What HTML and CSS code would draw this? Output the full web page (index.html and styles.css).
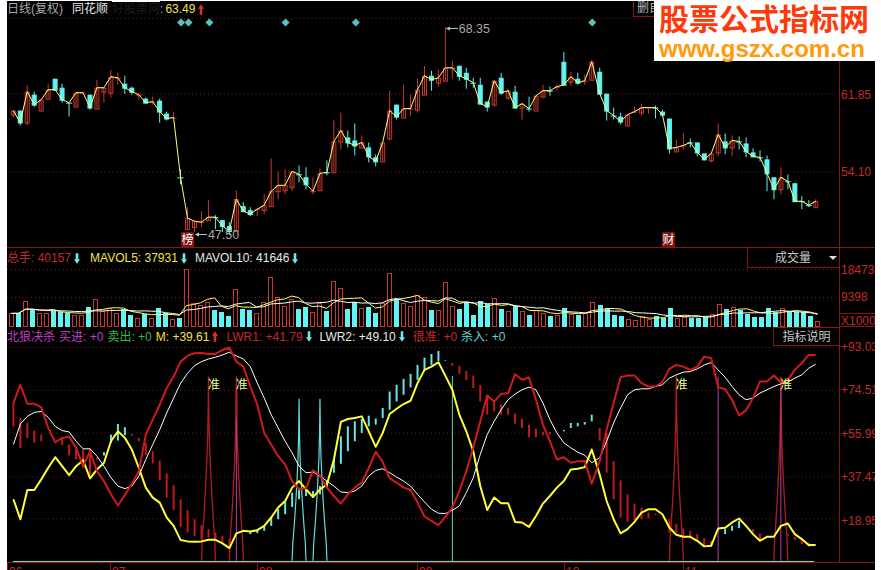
FILE: index.html
```html
<!DOCTYPE html>
<html lang="zh-CN">
<head>
    <meta charset="UTF-8">
    <title>北狼决杀 日线</title>
    <link rel="stylesheet" href="styles.css">
</head>
<body>
    <div class="chart">
        <div class="pane pane-main">
            <div class="plot">
                <div class="legend">
                    <span class="gray">日线(复权)</span>
                    <span class="white name">同花顺</span>
                    <span class="ghost">好股票网</span>
                    <span class="gray">:</span>
                    <span class="yellow val">63.49</span>
                    <svg class="arrow red-fill" viewBox="0 0 7 12"><path d="M3.5 0 7 5H5v7H2V5H0z"/></svg>
                    <div class="btn-del">删自</div>
                </div>
                <svg id="mainPlot" class="canvas" viewBox="7 17 832 231"></svg>
            </div>
            <div class="axis axis-main">
                <span>61.85</span>
                <span>54.10</span>
            </div>
        </div>

        <div class="pane pane-vol">
            <div class="plot">
                <div class="legend">
                    <span class="red">总手: 40157</span>
                    <svg class="arrow cyan-fill" viewBox="0 0 7 12"><path d="M2 0h3v7h2l-3.5 5L0 7h2z"/></svg>
                    <span class="yellow gap-vol">MAVOL5: 37931</span>
                    <svg class="arrow cyan-fill" viewBox="0 0 7 12"><path d="M2 0h3v7h2l-3.5 5L0 7h2z"/></svg>
                    <span class="white gap">MAVOL10: 41646</span>
                    <svg class="arrow cyan-fill" viewBox="0 0 7 12"><path d="M2 0h3v7h2l-3.5 5L0 7h2z"/></svg>
                    <div class="box box-vol"><span>成交量</span><i class="caret"></i></div>
                </div>
                <svg id="volPlot" class="canvas" viewBox="7 268 832 59"></svg>
            </div>
            <div class="axis axis-vol">
                <span>18473</span>
                <span>9398</span>
                <span class="unit">X1000</span>
            </div>
        </div>

        <div class="pane pane-ind">
            <div class="plot">
                <div class="legend">
                    <span class="magenta">北狼决杀</span>
                    <span class="magenta gap-s">买进: +0</span>
                    <span class="green gap-s">卖出: +0</span>
                    <span class="yellow gap-s">M: +39.61</span>
                    <svg class="arrow red-fill" viewBox="0 0 7 12"><path d="M3.5 0 7 5H5v7H2V5H0z"/></svg>
                    <span class="red gap">LWR1: +41.79</span>
                    <svg class="arrow cyan-fill" viewBox="0 0 7 12"><path d="M2 0h3v7h2l-3.5 5L0 7h2z"/></svg>
                    <span class="white gap">LWR2: +49.10</span>
                    <svg class="arrow cyan-fill" viewBox="0 0 7 12"><path d="M2 0h3v7h2l-3.5 5L0 7h2z"/></svg>
                    <span class="red gap">很准: +0</span>
                    <span class="cyan gap-s">杀入: +0</span>
                    <div class="box box-ind">指标说明</div>
                </div>
                <svg id="indPlot" class="canvas" viewBox="7 346 832 217"></svg>
            </div>
            <div class="axis axis-ind">
                <span>+93.03</span>
                <span>+74.51</span>
                <span>+55.99</span>
                <span>+37.47</span>
                <span>+18.95</span>
            </div>
        </div>

        <div class="dates">
            <span>06</span>
            <span>07</span>
            <span>08</span>
            <span>09</span>
            <span>10</span>
            <span>11</span>
        </div>

        <div class="logo">
            <div class="logo-title">股票公式指标网</div>
            <div class="logo-url">www.gszx.com.cn</div>
        </div>
    </div>

    <script src="chart.js"></script>
</body>
</html>
```

FILE: styles.css
```css
* {
    box-sizing: border-box;
}

body {
    margin: 0;
    background-color: white;
    font-family: "Liberation Sans", "Noto Sans CJK SC", sans-serif;
    font-size: 12px;
}

.chart {
    position: relative;
    width: 868px;
    height: 570px;
    margin-left: 7px;
    border-top: 1px solid white;
    background-color: black;
    overflow: hidden;
}

.pane {
    display: flex;
}

.pane-main {
    height: 247px;
}

.pane-vol {
    height: 79px;
}

.pane-ind {
    height: 236px;
    border-bottom: 1px solid #8a1515;
}

.plot {
    display: flex;
    flex-direction: column;
    width: 833px;
    border-right: 1px solid #8a1515;
}

.canvas {
    display: block;
    width: 832px;
    flex: 1;
    min-height: 0;
}

.pane-main .plot {
    border-bottom: 1px solid #8a1515;
}

.legend {
    display: flex;
    align-items: center;
    flex: none;
    white-space: nowrap;
    line-height: 14px;
}

.pane-main .legend {
    height: 16px;
}

.pane-vol .legend {
    height: 20px;
}

.pane-ind .legend {
    height: 19px;
}

.gray { color: #a9a9a9; }
.white { color: #e8e8e8; }
.yellow { color: #f5e14a; }
.red { color: #c42a26; }
.magenta { color: #c03fc0; }
.green { color: #39b54a; }
.cyan { color: #5fd6d6; }

.name {
    margin-left: 9px;
}

.ghost {
    margin-left: 4px;
    color: #1c1c1c;
    box-shadow: 0 -2px 0 white;
}

.val {
    margin-left: 2px;
}

.gap {
    margin-left: 8px;
}

.gap-vol {
    margin-left: 10px;
}

.gap-s {
    margin-left: 4px;
}

.arrow {
    flex: none;
    width: 6px;
    height: 11px;
    margin-left: 3px;
}

.red-fill { fill: #d8302a; }
.cyan-fill { fill: #6fe9ee; }

.btn-del {
    height: 16px;
    width: 50px;
    margin-left: auto;
    margin-right: 156px;
    padding-left: 3px;
    border: 1px solid #8a1515;
    border-top: 0;
    color: #b5b5b5;
}

.box {
    display: flex;
    align-items: center;
    height: 100%;
    margin-left: auto;
    color: #c8c8c8;
    border-left: 1px solid #8a1515;
    border-bottom: 1px solid #8a1515;
}

.box-vol {
    width: 92px;
    padding-left: 27px;
}

.box-ind {
    width: 66px;
    justify-content: center;
    border-top: 1px solid #8a1515;
}

.caret {
    width: 0;
    height: 0;
    margin-left: 18px;
    border-left: 4px solid transparent;
    border-right: 4px solid transparent;
    border-top: 4px solid #ddd;
}

.axis {
    display: flex;
    flex-direction: column;
    width: 35px;
    padding-left: 1px;
    color: #c42a26;
    white-space: nowrap;
    line-height: 14px;
    overflow: hidden;
}

.axis-main {
    padding-top: 87px;
    gap: 63px;
    border-bottom: 1px solid #8a1515;
}

.axis-vol {
    padding-top: 15px;
    gap: 13px;
}

.unit {
    margin-left: -1px;
    padding-left: 1px;
    height: 14px;
    margin-top: -4px;
    border-top: 1px solid #8a1515;
    border-bottom: 1px solid #8a1515;
}

.axis-ind {
    padding-top: 13px;
    gap: 29.4px;
}

.dates {
    display: grid;
    grid-template-columns: 103px 147px 160px 147px 119px 1fr;
    height: 7px;
    color: #c42a26;
    line-height: 14px;
    overflow: hidden;
}

.dates span {
    padding-top: 2px;
    padding-left: 1px;
    border-left: 1px solid #8a1515;
}

.logo {
    position: absolute;
    top: -1px;
    right: 0;
    width: 221px;
    height: 61px;
    padding-left: 5px;
    background-color: white;
    font-weight: bold;
    white-space: nowrap;
}

.logo-title {
    color: #ff3a0a;
    font-size: 30px;
    line-height: 40px;
    letter-spacing: 0;
}

.logo-url {
    margin-top: -3px;
    color: #ff9a0a;
    font-size: 24px;
    line-height: 24px;
}

/* chart marks */
.grid { stroke: #7a1414; stroke-width: 1; stroke-dasharray: 1 3; }
.up { fill: none; stroke: #c8382f; }
.down { fill: #62f3f3; stroke: #62f3f3; }
.wick-up { stroke: #c8382f; }
.wick-down { stroke: #62f3f3; }
.close-line { fill: none; stroke: #ffff73; stroke-width: 1; }
.diamond { fill: #55c4bc; }
.note { fill: #a8a8a8; font-size: 12.5px; }
.note-line { stroke: #c8c8c8; }
.note-head { fill: #c8c8c8; }
.tag { fill: #85110f; }
.tag-text { fill: white; font-size: 12px; }
.vol-ma5 { fill: none; stroke: #ffff66; }
.vol-ma10 { fill: none; stroke: white; }
.lwr1 { fill: none; stroke: #cf1a1e; stroke-width: 2; stroke-linejoin: round; }
.m-line { fill: none; stroke: #ffff33; stroke-width: 2; stroke-linejoin: round; }
.lwr2 { fill: none; stroke: white; stroke-width: 1; }
.bar-red { stroke: #c21a1a; stroke-width: 2; }
.bar-cyan { stroke: #66e6e6; stroke-width: 2; }
.spike-red { fill: none; stroke: #b01c1c; stroke-width: 1.3; }
.spike-cyan { fill: none; stroke: #66dddd; stroke-width: 1.2; }
.base { stroke: #66dddd; }
.stem-pink { stroke: #b43cb4; }
.stem-green { stroke: #62dcb4; }
.zhun { fill: #e4ff90; font-size: 12px; }
```

FILE: chart.js
```js
// x position of the n-th trading day
function dayX(i) {
    return Math.round(11 + 7.006 * i) + 0.5;
}

// [up, body top, body bottom, high, low]
var candles = [
    [1,111,115,111,118],[0,111,123,111,126],[1,92,123,86,126],[0,95,105,92,107],[1,100,111,100,111],
    [1,90,99,84,99],[0,79,90,79,90],[0,88,100,84,103],[0,103,103,103,117],[1,93,107,93,107],
    [1,93,93,93,93],[0,95,108,95,110],[1,88,109,80,109],[1,88,92,88,103],[1,77,93,70,98],
    [1,78,78,73,85],[0,84,88,76,94],[0,88,92,87,95],[1,95,95,93,100],[0,99,103,98,104],
    [1,102,102,97,105],[0,101,112,99,123],[0,114,119,112,121],[1,118,118,112,118],[0,178,178,170,185],
    [1,219,230,208,230],[1,222,228,222,233],[1,223,223,212,228],[1,218,221,201,221],[0,218,218,216,230],
    [0,221,227,221,233],[0,227,232,223,236],[1,200,232,191,232],[0,207,212,203,212],[0,211,215,208,217],
    [1,210,210,209,217],[1,206,211,195,215],[1,192,207,159,207],[1,186,192,172,200],[1,186,191,170,195],
    [1,172,188,172,192],[0,175,175,166,183],[0,178,185,168,190],[1,192,192,178,195],[1,174,191,169,191],
    [0,173,173,161,176],[1,142,173,121,173],[1,131,142,113,150],[0,138,143,131,148],[0,141,146,124,156],
    [1,143,148,136,148],[0,148,157,143,163],[0,158,162,155,167],[1,143,162,143,162],[1,111,139,91,141],
    [0,105,117,105,120],[1,109,118,85,118],[1,109,109,95,116],[1,90,110,79,113],[1,76,95,66,95],
    [0,76,80,71,91],[1,78,83,70,87],[1,68,81,27,81],[1,68,68,61,79],[0,66,76,66,81],
    [0,73,79,68,89],[0,83,83,78,88],[0,85,104,78,104],[0,102,107,102,112],[1,81,105,81,107],
    [0,78,93,73,95],[1,91,98,89,100],[0,92,108,86,108],[1,104,108,104,120],[0,109,109,97,112],
    [1,96,111,96,111],[1,91,97,85,98],[0,91,91,87,96],[1,87,87,85,91],[0,62,85,52,85],
    [1,77,82,72,86],[0,79,83,73,85],[1,81,81,75,85],[1,62,80,60,80],[0,72,94,68,94],
    [0,94,111,94,121],[0,116,116,108,120],[0,117,122,113,125],[1,115,126,115,126],[1,112,112,107,114],
    [1,108,113,104,116],[1,108,108,108,114],[0,108,108,106,119],[0,112,115,110,117],[0,119,149,119,154],
    [1,148,152,140,152],[1,146,146,134,150],[0,143,143,139,148],[0,143,153,143,157],[0,154,160,154,161],
    [1,154,161,154,163],[1,135,153,124,157],[0,142,148,134,155],[1,141,148,136,157],[0,142,142,137,150],
    [0,144,152,138,158],[0,153,157,149,157],[0,158,158,151,162],[0,160,174,156,192],[0,178,190,178,200],
    [1,178,190,168,195],[0,182,182,175,190],[0,184,202,184,202],[0,202,202,197,210],[0,206,206,201,208],
    [1,202,208,200,208]
];

// top of each volume bar, as 3x pixels from y=245
var volTops = [
    205,205,168,192,205,205,198,200,205,210, 210,186,163,198,190,203,192,210,218,208,
    218,190,205,222,218,72,175,180,170,195, 200,212,133,192,195,205,172,95,155,183,
    162,192,185,202,175,197,108,130,192,172, 190,186,205,175,85,163,175,183,150,155,
    195,195,112,183,192,172,210,168,178,158, 192,198,183,198,210,195,203,213,210,190,
    207,210,203,172,180,188,210,213,223,226, 212,222,212,218,190,218,215,220,218,215,
    208,178,192,187,195,207,215,215,190,200, 190,200,202,202,212,228
];

// indicator lines, as 3x pixels from y=345
var lwr1 = [
    175,120,177,177,188,250,293,280,277,310, 365,320,380,410,450,484,452,418,380,270,
    225,180,130,95,50,32,25,24,27,27, 15,8,50,65,125,180,265,300,335,360,
    410,435,432,378,393,430,455,478,450,430, 415,370,322,352,402,415,430,437,475,517,
    530,543,518,490,440,380,310,230,152,170, 148,145,88,105,98,165,240,290,345,338,
    355,350,350,418,350,255,175,97,92,92, 115,125,125,112,72,60,65,75,65,35,
    40,127,133,165,212,197,160,110,110,92, 113,105,75,55,30,30
];
var mLine = [
    465,525,437,437,405,370,338,365,392,365, 347,402,375,355,290,260,280,315,370,430,
    460,475,520,545,588,592,593,592,587,587, 598,612,568,560,562,558,545,520,490,470,
    430,410,435,458,435,420,345,232,223,220, 215,260,307,265,208,192,178,168,115,75,
    65,52,93,135,210,260,320,425,497,460, 477,477,533,535,548,515,478,455,430,410,
    375,373,368,315,390,470,525,568,555,533, 505,495,495,510,550,572,578,578,590,607,
    605,553,551,535,523,545,570,590,578,578, 545,538,570,585,603,603
];
var lwr2 = [
    300,238,215,203,200,218,245,258,262,290, 313,313,335,365,400,425,433,425,395,345,
    300,255,205,160,115,85,62,50,42,37, 30,22,33,42,65,115,160,210,250,290,
    325,365,385,383,395,410,425,443,445,440, 425,395,378,373,385,398,410,425,450,473,
    495,507,508,498,485,445,400,330,270,230, 195,165,148,135,127,135,175,225,265,295,
    310,323,332,355,340,290,235,190,150,135, 132,132,125,120,100,90,82,80,72,60,
    53,75,97,125,150,165,160,145,135,125, 117,112,100,90,70,58
];

// [day, red?, top, bottom]
var sticks = [
    [0,1,175,245],[1,1,220,310],[2,1,235,280],[3,1,258,295],[4,1,270,290],[7,1,280,302],[8,1,300,333],
    [9,1,305,345],[10,1,315,370],[11,1,310,390],[12,1,340,345],[13,0,323,333],[14,0,270,295],[15,0,238,288],
    [16,0,248,272],[17,0,270,272],[18,1,280,290],[19,1,295,332],[20,1,320,357],[21,1,348,408],[22,1,387,460],
    [23,1,423,497],[24,1,465,548],[25,1,498,565],[26,1,525,575],[27,1,543,585],[28,1,555,580],[29,1,565,590],
    [30,1,575,595],[31,1,585,605],[32,1,135,215],[34,0,563,570],[35,0,557,567],[36,0,545,560],[37,0,520,545],
    [38,0,495,525],[39,0,470,510],[40,0,445,488],[41,0,430,465],[42,0,435,455],[43,0,440,460],[44,0,425,450],
    [45,0,410,430],[46,0,345,385],[47,0,275,358],[48,0,245,320],[49,0,230,290],[50,0,223,265],[51,0,213,245],
    [52,0,222,240],[53,0,190,220],[54,0,140,195],[55,0,120,170],[56,0,102,150],[57,0,87,128],[58,0,60,105],
    [59,0,38,75],[60,0,27,60],[61,0,18,48],[62,0,45,47],[63,1,54,63],[64,1,63,87],[65,1,78,105],[66,1,92,130],
    [67,1,120,170],[68,1,150,210],[69,1,170,200],[70,1,180,210],[71,1,190,210],[72,1,207,237],[73,1,222,250],
    [74,1,240,278],[75,1,252,278],[76,1,262,272],[77,1,262,270],[79,0,256,260],[80,0,235,250],[81,0,235,245],
    [82,0,232,240],[83,0,210,230],[84,1,250,288],[85,1,265,385],[86,1,350,465],[87,1,408,520],[88,1,450,532],
    [89,1,478,527],[90,1,490,525],[91,1,505,522],[92,1,508,512],[94,1,525,565],[95,1,540,565],[96,1,553,575],
    [97,1,560,578],[98,1,570,590],[99,1,582,605],[100,1,590,605],[102,0,555,570],[103,0,545,560],[104,0,530,552],
    [106,1,555,565],[107,1,568,590],[108,1,575,580],[111,1,570,575],[112,1,578,588],[113,1,588,600],[114,1,597,608]
];

var DIAMONDS = [180, 187.5, 208.5, 285, 355.5, 593];

function ind(v) {
    return 345 + v / 3;
}

function polyline(points, cls) {
    return '<polyline class="' + cls + '" points="' + points.join(' ') + '"/>';
}

function line(x1, y1, x2, y2, cls) {
    return '<line class="' + cls + '" x1="' + x1 + '" y1="' + y1 + '" x2="' + x2 + '" y2="' + y2 + '"/>';
}

function text(x, y, cls, str) {
    return '<text class="' + cls + '" x="' + x + '" y="' + y + '">' + str + '</text>';
}

function gridLines(ys) {
    return ys.map(function (y) {
        return line(7, y + 0.5, 839, y + 0.5, 'grid');
    }).join('');
}

// arrow pointing left at a high or low, then the price
function priceNote(x, y, price) {
    var head = '<polygon class="note-head" points="' + x + ',' + y + ' ' + (x + 4) + ',' + (y - 2) + ' ' + (x + 4) + ',' + (y + 2) + '"/>';
    return head + line(x + 3, y, x + 12, y, 'note-line') + text(x + 13, y + 4.5, 'note', price);
}

function drawMain() {
    var html = gridLines([18, 94, 172]);

    DIAMONDS.forEach(function (x) {
        html += '<polygon class="diamond" points="' + (x - 4) + ',22.5 ' + x + ',18.5 ' + (x + 4) + ',22.5 ' + x + ',26.5"/>';
    });

    candles.forEach(function (c, i) {
        var x = dayX(i);
        var kind = c[0] ? 'up' : 'down';
        html += line(x, c[3], x, c[4], 'wick-' + kind);
        if (c[1] === c[2]) {
            html += line(x - 3, c[1] + 0.5, x + 3, c[1] + 0.5, 'wick-' + kind);
        } else {
            html += '<rect class="' + kind + '" x="' + (x - 2) + '" y="' + (c[1] + 0.5) + '" width="4" height="' + (c[2] - c[1]) + '"/>';
        }
    });

    var closes = candles.map(function (c, i) {
        return dayX(i) + ',' + (c[0] ? c[1] : c[2]);
    });
    html += polyline(closes, 'close-line');

    html += priceNote(446, 28.5, '68.35');
    html += priceNote(194, 235.5, '47.50');

    html += '<rect class="tag" x="180" y="233" width="13" height="15"/>' + text(180.5, 245, 'tag-text', '榜');
    html += '<rect class="tag" x="663" y="233" width="13" height="15"/>' + text(663.5, 245, 'tag-text', '财');

    document.getElementById('mainPlot').innerHTML = html;
}

function average(tops, i, n) {
    var from = Math.max(0, i - n + 1);
    var sum = 0;
    for (var k = from; k <= i; k++) {
        sum += tops[k];
    }
    return sum / (i - from + 1);
}

function drawVolume() {
    var html = gridLines([269, 297]);

    volTops.forEach(function (t, i) {
        var x = dayX(i);
        var top = Math.round(245 + t / 3);
        var kind = candles[i][0] ? 'up' : 'down';
        html += '<rect class="' + kind + '" x="' + (x - 2) + '" y="' + (top + 0.5) + '" width="4" height="' + (326 - top) + '"/>';
    });

    var ma5 = volTops.map(function (t, i) {
        return dayX(i) + ',' + (245 + average(volTops, i, 5) / 3).toFixed(1);
    });
    var ma10 = volTops.map(function (t, i) {
        return dayX(i) + ',' + (245 + average(volTops, i, 10) / 3).toFixed(1);
    });
    html += polyline(ma5, 'vol-ma5') + polyline(ma10, 'vol-ma10');

    document.getElementById('volPlot').innerHTML = html;
}

// stepped peak of a signal
function spike(day, peak, cls) {
    var cx = dayX(day);
    var steps = [[7, 650], [6.3, 590], [4.7, 520], [3.3, 450], [2, 370], [1, 295], [0.4, 210], [0, 95]];
    var span = (650 - peak) / (650 - 95);
    var left = steps.map(function (s) {
        return (cx - s[0]) + ',' + ind(650 - (650 - s[1]) * span);
    });
    var right = steps.slice(0, -1).reverse().map(function (s) {
        return (cx + s[0]) + ',' + ind(650 - (650 - s[1]) * span);
    });
    return polyline(left.concat(right), cls);
}

function series(values) {
    return values.map(function (v, i) {
        return dayX(i) + ',' + ind(v).toFixed(1);
    });
}

function drawIndicator() {
    var html = gridLines([347, 390, 433, 477, 519]);

    html += line(11, 562.5, 816, 562.5, 'base');

    sticks.forEach(function (s) {
        html += line(dayX(s[0]), ind(s[2]), dayX(s[0]), ind(s[3]), s[1] ? 'bar-red' : 'bar-cyan');
    });

    [28, 32, 95, 110].forEach(function (d) {
        html += spike(d, 95, 'spike-red');
    });
    [41, 44].forEach(function (d) {
        html += spike(d, 162, 'spike-cyan');
    });

    html += line(dayX(32), ind(215), dayX(32), 562, 'stem-pink');
    html += line(dayX(101), ind(95), dayX(101), 562, 'stem-pink');
    html += line(dayX(110), ind(130), dayX(110), 562, 'stem-pink');
    html += line(dayX(63), ind(93), dayX(63), 562, 'stem-green');

    html += polyline(series(lwr2), 'lwr2');
    html += polyline(series(mLine), 'm-line');
    html += polyline(series(lwr1), 'lwr1');

    [207, 235, 677, 782].forEach(function (x) {
        html += text(x, 389, 'zhun', '准');
    });

    document.getElementById('indPlot').innerHTML = html;
}

drawMain();
drawVolume();
drawIndicator();
```
